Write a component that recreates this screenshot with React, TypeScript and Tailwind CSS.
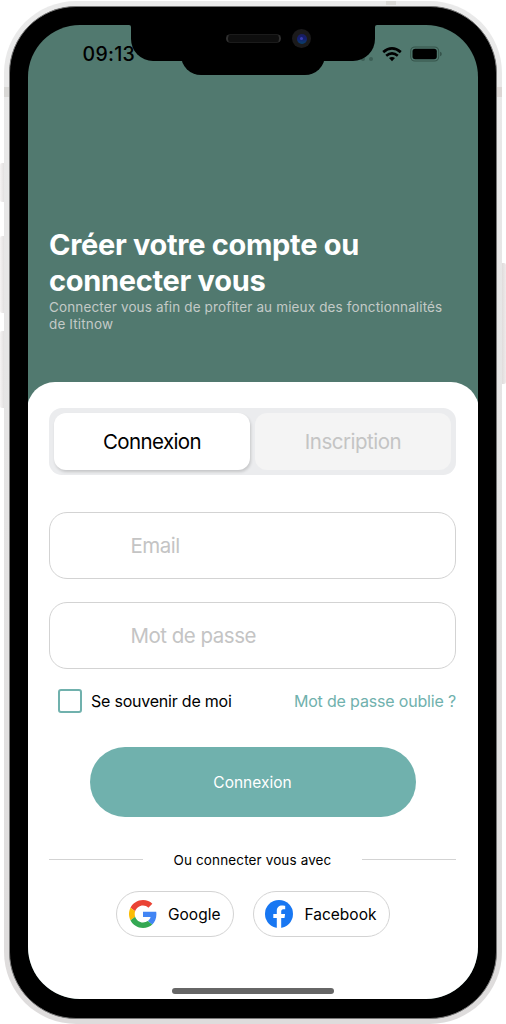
function Notch() {
  return (
    <div className="absolute inset-x-0 -top-px flex flex-col items-center">
      <div className="relative h-[37px] w-[244px] rounded-b-[22px] bg-black">
        <div className="absolute -left-[2px] top-0 size-[3px] bg-black" />
        <div className="absolute -left-[3px] top-px size-[3px] rounded-tr-[2px] bg-[#51796f]" />
        <div className="absolute -right-[2px] top-0 size-[3px] bg-black" />
        <div className="absolute -right-[3px] top-px size-[3px] rounded-tl-[2px] bg-[#51796f]" />
        <div className="absolute left-[95px] top-[10px] h-[9px] w-[55px] rounded-full border-x-2 border-y border-x-[#303030] border-y-[#1b1b1b] bg-[#0e0e0e]" />
        <div className="absolute left-[161px] top-[5px] flex size-[19px] items-center justify-center rounded-full bg-[#1b1a1b]">
          <div className="flex size-[10px] justify-center rounded-full bg-linear-to-b from-[#191c5c] via-[#141f70] to-[#073f68]">
            <div className="mt-[3px] size-[3px] rounded-full bg-[#3a3fb0]" />
          </div>
        </div>
      </div>
      <div className="-mt-[18px] h-[32px] w-[144px] rounded-b-[20px] bg-black" />
    </div>
  );
}

function StatusBar() {
  return (
    <div className="flex h-[57px] items-center justify-between pl-[54.5px] pr-[36px]">
      <span className="mt-[2px] text-[19.5px] font-medium leading-none tracking-[0.3px] text-black">09:13</span>
      <div className="flex items-center">
        <span className="mr-[4px] mt-[10px] size-[4px] rounded-full bg-[#3d5f56]" />
        <span className="mr-[9px] mt-[10px] size-[4px] rounded-full bg-[#3d5f56]" />
        <svg width="20" height="16" viewBox="0 0 20 16" fill="none" stroke="#000" strokeWidth="2.7">
          <path d="M1.2 6.1 Q10 -1.4 18.8 6.1" />
          <path d="M4.2 9.7 Q10 5 15.8 9.7" />
          <path d="M7 12.1 Q10 9.7 13 12.1 L10 15.2 Z" fill="#000" stroke="none" />
        </svg>
        <svg className="ml-[8px]" width="32" height="16" viewBox="0 0 32 16">
          <rect x="0.7" y="1" width="28" height="14" rx="4.2" fill="none" stroke="#36544b" strokeWidth="1.1" />
          <rect x="2.5" y="2.8" width="24.3" height="10.4" rx="2.7" fill="#000" />
          <path d="M30 5.7 Q31.8 6.2 31.8 8 Q31.8 9.8 30 10.3 Z" fill="#36544b" />
        </svg>
      </div>
    </div>
  );
}

function GoogleLogo() {
  return (
    <svg width="28" height="28" viewBox="0 0 48 48">
      <path
        fill="#ea4335"
        d="M24 9.5c3.54 0 6.71 1.22 9.21 3.6l6.85-6.85C35.9 2.38 30.47 0 24 0 14.62 0 6.51 5.38 2.56 13.22l7.98 6.19C12.43 13.72 17.74 9.5 24 9.5z"
      />
      <path
        fill="#4285f4"
        d="M46.98 24.55c0-1.57-.15-3.09-.38-4.55H24v9.02h12.94c-.58 2.96-2.26 5.48-4.78 7.18l7.73 6c4.51-4.18 7.09-10.36 7.09-17.65z"
      />
      <path
        fill="#fbbc05"
        d="M10.53 28.59c-.48-1.45-.76-2.99-.76-4.59s.27-3.14.76-4.59l-7.98-6.19C.92 16.46 0 20.12 0 24c0 3.88.92 7.54 2.56 10.78l7.97-6.19z"
      />
      <path
        fill="#34a853"
        d="M24 48c6.48 0 11.93-2.13 15.89-5.81l-7.73-6c-2.15 1.45-4.92 2.3-8.16 2.3-6.26 0-11.57-4.22-13.47-9.91l-7.98 6.19C6.51 42.62 14.62 48 24 48z"
      />
    </svg>
  );
}

function FacebookLogo() {
  return (
    <svg width="28" height="28" viewBox="0 0 28 28">
      <circle cx="14" cy="14" r="14" fill="#1877f2" />
      <path
        d="M11.8 28 V18 H8.3 V14 H11.8 V10.9 C11.8 7.4 13.9 5.5 17.1 5.5 C18.6 5.5 20.2 5.8 20.2 5.8 V9.2 H18.4 C16.7 9.2 16.2 10.3 16.2 11.4 V14 H20.1 L19.5 18 H16.2 V28 Z"
        fill="#fff"
      />
    </svg>
  );
}

function Field({ label, type }: { label: string; type: string }) {
  return (
    <input
      type={type}
      placeholder={label}
      className="h-[67px] w-full rounded-[18px] border border-[#d3d3d3] bg-white pl-[80.5px] text-[20.5px] tracking-[-0.5px] outline-none placeholder:text-[#c4c4c4]"
    />
  );
}

export default function App() {
  return (
    <div
      className="relative h-[1024px] w-[506px] overflow-hidden bg-white pl-[4px] pt-px"
      style={{ fontFamily: 'Inter, "Liberation Sans", sans-serif' }}
    >
      <div className="absolute left-0 top-[163px] h-[39px] w-[5px] rounded-l-[2px] bg-linear-to-r from-[#f5f3f3] to-[#dedcdc]" />
      <div className="absolute left-0 top-[236px] h-[77px] w-[5px] rounded-l-[2px] bg-linear-to-r from-[#f5f3f3] to-[#dedcdc]" />
      <div className="absolute left-0 top-[331px] h-[77px] w-[5px] rounded-l-[2px] bg-linear-to-r from-[#f5f3f3] to-[#dedcdc]" />
      <div className="absolute left-[501px] top-[263px] h-[121px] w-[5px] rounded-r-[2px] bg-linear-to-r from-[#dcd8d8] to-[#efebeb]" />

      <div className="relative h-[1023px] w-[498px] rounded-[72px] bg-linear-to-b from-[#eaeaea] to-[#dedcdc] p-[5px]">
        <div className="absolute left-[382px] top-0 h-[4px] w-[10px] bg-[#dad9d6]" />
        <div className="absolute left-0 top-[86px] h-[10px] w-[5px] bg-[#d8d7d5]" />
        <div className="absolute right-0 top-[86px] h-[10px] w-[5px] bg-[#dcd7d5]" />
        <div className="h-[1013px] w-[488px] rounded-[67px] border border-[#777] bg-black pl-[18px] pt-[18px]">
          <div className="relative flex h-[974px] w-[450px] flex-col overflow-hidden rounded-[52px] bg-[#51796f]">
            <StatusBar />
            <header className="mt-[145px] px-[21px]">
              <h1 className="whitespace-nowrap text-[29px] font-bold leading-[36px] tracking-[-0.3px] text-white">
                Créer votre compte ou
                <br />
                connecter vous
              </h1>
              <p className="whitespace-nowrap text-[13.5px] font-normal leading-[16.5px] tracking-[0.14px] text-[#c3cac7]">
                Connecter vous afin de profiter au mieux des fonctionnalités
                <br />
                de Ititnow
              </p>
            </header>
            <main className="-mx-px mt-[50.4px] flex grow flex-col rounded-t-[28px] bg-white pl-[22px] pr-[23px] pt-[25.6px]">
              <div className="flex h-[67px] shrink-0 gap-[5px] rounded-[13px] bg-[#ebecee] p-[5px]">
                <button className="flex-1 rounded-[12px] bg-white pt-px text-[20.5px] tracking-[-0.6px] text-black shadow-[1px_2px_3px_rgba(0,0,0,0.16)]">
                  Connexion
                </button>
                <button className="flex-1 rounded-[12px] bg-[#f4f4f4] pt-px text-[20.5px] tracking-[-0.5px] text-[#c4c4c4]">
                  Inscription
                </button>
              </div>
              <div className="mt-[37px] flex flex-col gap-[23px]">
                <Field label="Email" type="email" />
                <Field label="Mot de passe" type="password" />
              </div>
              <div className="mt-[20px] flex h-[24px] items-center pl-[9px] text-[16px]">
                <span className="size-[24px] rounded-[3px] border-[2.5px] border-[#70b1ad]" />
                <span className="ml-[9px] whitespace-nowrap tracking-[-0.22px] text-black">Se souvenir de moi</span>
                <a className="ml-auto whitespace-nowrap tracking-[-0.17px] text-[#70b1ad]">Mot de passe oublie ?</a>
              </div>
              <button className="mt-[34px] h-[70px] w-[326px] self-center rounded-[35px] bg-[#70b1ad] pt-px text-[15.5px] text-white">
                Connexion
              </button>
              <div className="mt-[34px] flex h-[17px] items-center justify-between">
                <span className="h-px w-[94px] bg-[#d3d3d3]" />
                <span className="mt-[2px] text-[13.5px] tracking-[0.13px] text-black">Ou connecter vous avec</span>
                <span className="h-px w-[94px] bg-[#d3d3d3]" />
              </div>
              <div className="mt-[23px] flex gap-[19px] pl-[67px] text-[15.5px] text-black">
                <button className="flex h-[46px] w-[118px] items-center rounded-full border border-[#d3d3d3] pl-[12px]">
                  <GoogleLogo />
                  <span className="ml-[11px] mt-px">Google</span>
                </button>
                <button className="flex h-[46px] w-[137px] items-center rounded-full border border-[#d3d3d3] pl-[11px]">
                  <FacebookLogo />
                  <span className="ml-[11.5px] mt-px">Facebook</span>
                </button>
              </div>
              <div className="mb-[5px] mt-auto h-[6px] w-[162px] self-center rounded-full bg-[#666]" />
            </main>
            <Notch />
          </div>
        </div>
      </div>
    </div>
  );
}
